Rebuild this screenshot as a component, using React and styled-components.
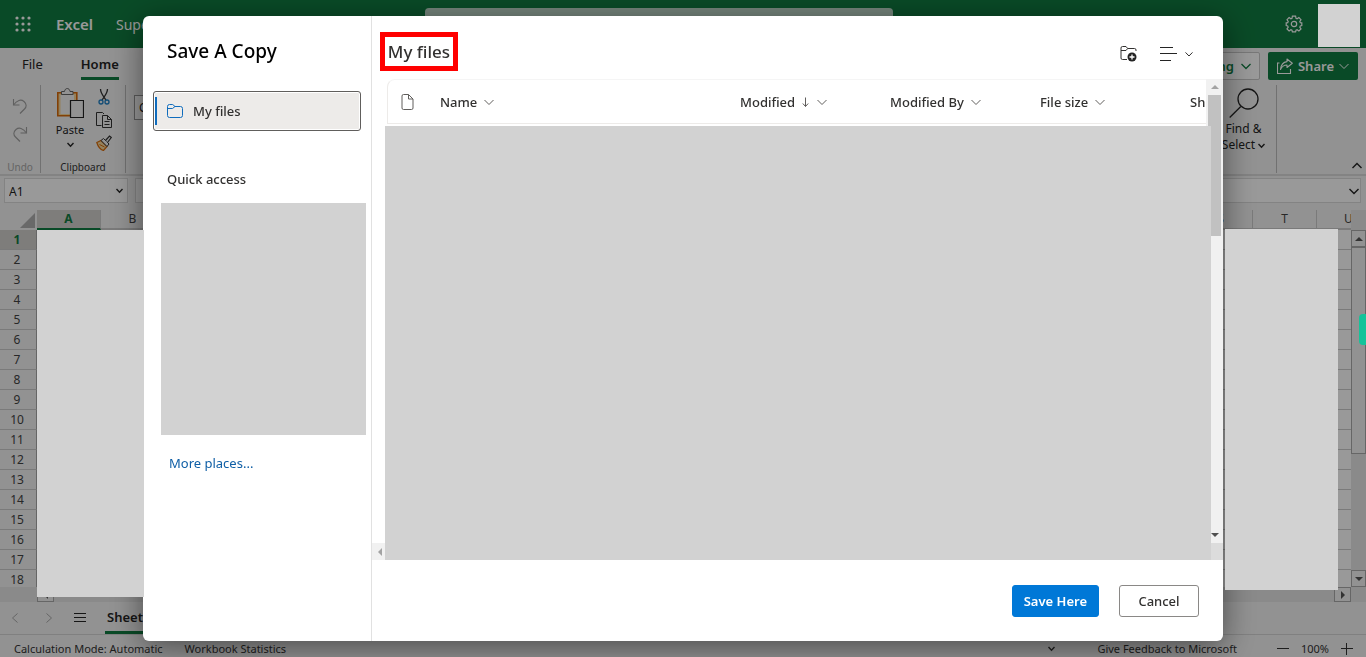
import React, { useState } from 'react';
import styled, { createGlobalStyle, css } from 'styled-components';

const GlobalStyle = createGlobalStyle`
  *, *::before, *::after {
    box-sizing: border-box;
  }

  body {
    margin: 0;
    overflow: hidden;
    font-family: 'Segoe UI', 'Noto Sans', 'Open Sans', sans-serif;
    font-size: 13px;
    color: #242424;
  }

  button, input {
    font: inherit;
    color: inherit;
  }

  svg {
    display: block;
    flex: none;
  }
`;

const Shell = styled.div`
  display: flex;
  flex-direction: column;
  height: 100vh;
  background: #f3f3f3;
`;

const PlainButton = styled.button`
  display: flex;
  align-items: center;
  justify-content: center;
  padding: 0;
  border: none;
  background: transparent;
  cursor: pointer;
`;

const Redacted = styled.div`
  background: #d2d2d2;
`;

/* ---------- top bar ---------- */

const TopBar = styled.header`
  display: grid;
  grid-template-columns: 1fr 468px 1fr 48px;
  height: 48px;
  flex: none;
  background: #107c41;
  color: #fff;
`;

const Brand = styled.div`
  display: flex;
  align-items: center;
  padding-left: 15px;
`;

const AppName = styled.span`
  margin: 0 23px 0 24px;
  font-size: 15px;
  font-weight: 600;
`;

const FileName = styled.span`
  font-size: 14px;
`;

const SearchBox = styled.input`
  height: 32px;
  margin: 8px 0;
  border: none;
  border-radius: 4px;
  background: #c2dccd;
`;

const TopActions = styled.div`
  display: flex;
  align-items: center;
  justify-content: flex-end;
  padding-right: 15px;
`;

const Avatar = styled(Redacted)`
  position: relative;
  z-index: 2;
  width: 42px;
  height: 43px;
  margin-top: 4px;
`;

/* ---------- ribbon ---------- */

const TabRow = styled.div`
  display: flex;
  align-items: center;
  height: 32px;
  margin-top: 2px;
  padding: 0 8px 0 22px;
  gap: 38px;
  flex: none;
  font-size: 13px;
`;

const Tab = styled(PlainButton)`
  height: 28px;
  padding-bottom: 1px;
  border-bottom: 3px solid ${({ $active }) => ($active ? '#107c41' : 'transparent')};
  font-weight: ${({ $active }) => ($active ? 600 : 400)};
`;

const RibbonActions = styled.div`
  display: flex;
  gap: 8px;
  margin-left: auto;
  font-weight: 600;
  font-size: 13px;
`;

const ModeButton = styled(PlainButton)`
  height: 28px;
  gap: 7px;
  padding: 0 8px;
  border: 1px solid #c8c8c8;
  border-radius: 2px;
  background: #fff;
  color: #107c41;
`;

const ShareButton = styled(PlainButton)`
  width: 90px;
  height: 28px;
  gap: 5px;
  border-radius: 2px;
  background: #107c41;
  color: #fff;
`;

const Ribbon = styled.div`
  display: flex;
  height: 94px;
  padding-top: 3px;
  flex: none;
  border-bottom: 2px solid #dadada;
  font-size: 12px;
`;

const Group = styled.div`
  display: flex;
  flex-direction: column;
  justify-content: space-between;
  align-items: center;
  width: ${({ $width }) => $width}px;
  height: 88px;
  border-right: 1px solid #bcbcbc;
`;

const GroupLabel = styled.span`
  font-size: 10px;
  line-height: 12px;
  color: ${({ $muted }) => ($muted ? '#a8a8a8' : '#333')};
`;

const UndoStack = styled.div`
  display: flex;
  flex-direction: column;
  gap: 12px;
  padding-top: 13px;
`;

const ClipboardTools = styled.div`
  display: flex;
  gap: 12px;
  padding-left: 2px;
`;

const PasteButton = styled(PlainButton)`
  flex-direction: column;
  justify-content: flex-start;
  gap: 2px;
  padding-top: 3px;
  font-size: 11px;
  line-height: 18px;
`;

const SmallTools = styled.div`
  display: flex;
  flex-direction: column;
  gap: 7px;
  padding-top: 4px;
`;

const FontBox = styled.input`
  width: 120px;
  height: 25px;
  margin: 10px 0 0 8px;
  padding: 0 4px;
  border: 1px solid #999;
  background: #fff;
`;

const FindGroup = styled(Group)`
  justify-content: flex-start;
  margin-left: auto;
  margin-right: 89px;
`;

const FindButton = styled(PlainButton)`
  flex-direction: column;
  padding-top: 3px;
  line-height: 16px;

  svg {
    margin-bottom: 3px;
  }

  span {
    display: flex;
    align-items: center;
    gap: 3px;
  }

  span svg {
    margin: 0;
  }
`;

const CollapseButton = styled(PlainButton)`
  position: absolute;
  right: 4px;
  top: 161px;
`;

/* ---------- formula bar ---------- */

const FormulaBar = styled.div`
  display: flex;
  gap: 7px;
  padding: 2px 5px 7px 4px;
  flex: none;
`;

const FormulaField = styled.div`
  display: flex;
  align-items: center;
  width: ${({ $wide }) => ($wide ? 'auto' : '124px')};
  flex: ${({ $wide }) => ($wide ? 1 : 'none')};
  height: 25px;
  padding-right: ${({ $wide }) => ($wide ? 1 : 4)}px;
  border: 1px solid #dadada;
  background: #fff;

  input {
    flex: 1;
    min-width: 0;
    padding: 2px 4px 0;
    border: none;
    background: transparent;
    font-size: 12px;
  }
`;

/* ---------- sheet ---------- */

const SheetArea = styled.div`
  position: relative;
  display: flex;
  flex: 1;
  min-height: 0;
`;

const GridColumn = styled.div`
  display: flex;
  flex-direction: column;
  flex: 1;
  min-width: 0;
`;

const GridClip = styled.div`
  flex: 1;
  min-height: 0;
  overflow: hidden;
`;

const Grid = styled.table`
  width: 1381px;
  table-layout: fixed;
  border-spacing: 0;
  color: #444;

  td {
    border-right: 1px solid #ccc;
    border-bottom: 1px solid #ccc;
    background: #fff;
  }
`;

const selected = css`
  background: #d2d0ce;
  color: #107c41;
  font-weight: 700;
`;

const ColumnHead = styled.th`
  width: 64px;
  height: 20px;
  padding: 0;
  border-right: 1px solid #ccc;
  border-bottom: 2px solid ${({ $selected }) => ($selected ? '#107c41' : '#ccc')};
  font-size: 12px;
  line-height: 16px;
  font-weight: 400;
  ${({ $selected }) => $selected && selected}
`;

const Corner = styled.th`
  width: 37px;
  padding: 0 2px 0 0;

  svg {
    margin-left: auto;
  }
`;

const RowHead = styled.th`
  height: 20px;
  padding: 1px 2px 0 0;
  border-right: 1px solid #aaa;
  border-bottom: 1px solid #ccc;
  font-size: 12px;
  line-height: 16px;
  font-weight: 400;
  ${({ $selected }) => $selected && selected}
`;

const VerticalBar = styled.div`
  display: flex;
  flex-direction: column;
  width: 15px;
  padding: 20px 0 15px;
  background: #e6e6e6;
`;

const HorizontalBar = styled.div`
  display: flex;
  justify-content: space-between;
  height: 15px;
  padding-left: 37px;
  flex: none;
  background: #e6e6e6;
`;

const ArrowButton = styled(PlainButton)`
  width: ${({ $wide }) => ($wide ? 17 : 15)}px;
  height: ${({ $wide }) => ($wide ? 15 : 17)}px;
  border: 1px solid #ababab;
  background: #f3f3f3;
  color: #555;
`;

const VerticalThumb = styled.div`
  height: 207px;
  margin: 0 0 auto;
  border: 1px solid #ababab;
  background: #f3f3f3;
`;

const LeftRedaction = styled(Redacted)`
  position: absolute;
  z-index: 3;
  left: 37px;
  top: 20px;
  bottom: 5px;
  width: 107px;
`;

const RightRedaction = styled(Redacted)`
  position: absolute;
  z-index: 2;
  right: 28px;
  top: 19px;
  bottom: 12px;
  width: 113px;
`;

const SheetTabs = styled.div`
  display: flex;
  align-items: center;
  height: 32px;
  padding-left: 11px;
  flex: none;
`;

const SheetNav = styled(PlainButton)`
  margin-right: ${({ $gap }) => $gap}px;
  color: ${({ $muted }) => ($muted ? '#a8a8a8' : '#242424')};
`;

const SheetTab = styled(PlainButton)`
  height: 32px;
  padding: 1px 2px 0;
  border-bottom: 3px solid #107c41;
  font-size: 13px;
  font-weight: 600;
`;

const StatusBar = styled.footer`
  display: flex;
  align-items: center;
  height: 23px;
  padding: 5px 13px 0 14px;
  flex: none;
  border-top: 1px solid #d6d6d6;
  font-size: 11px;
  line-height: 16px;
  color: #333;
`;

const StatusItem = styled.span`
  margin-right: 22px;
`;

const StatusRight = styled.div`
  display: flex;
  align-items: center;
  margin-left: auto;
`;

const Feedback = styled(PlainButton)`
  margin: 0 40px 0 42px;
`;

const Zoom = styled.div`
  display: flex;
  align-items: center;
  gap: 12px;
`;

const SideHandle = styled.div`
  position: absolute;
  z-index: 4;
  right: 0;
  top: 314px;
  width: 7px;
  height: 31px;
  border-radius: 4px 0 0 4px;
  background: #15c39a;
`;

/* ---------- dialog ---------- */

const Overlay = styled.div`
  position: fixed;
  inset: 0;
  z-index: 1;
  display: flex;
  justify-content: center;
  padding: 16px;
  background: rgba(0, 0, 0, 0.4);
`;

const Dialog = styled.section`
  display: flex;
  width: 100%;
  max-width: 1080px;
  border-radius: 6px;
  overflow: hidden;
  background: #fff;
  color: #323130;
  box-shadow: 0 6px 32px rgba(0, 0, 0, 0.5);
`;

const Places = styled.nav`
  display: flex;
  flex-direction: column;
  width: 229px;
  padding: 20px 10px;
  flex: none;
  border-right: 1px solid #e1e1e1;
`;

const DialogTitle = styled.h1`
  margin: 0 0 25px 14px;
  font-size: 19px;
  line-height: 30px;
  font-weight: 500;
  color: #000;
`;

const PlaceButton = styled.button`
  display: flex;
  align-items: center;
  gap: 10px;
  height: 40px;
  margin-bottom: 36px;
  padding: 0 9px 0 0;
  border: 1px solid #605e5c;
  border-radius: 3px;
  background: #edebe9;
  box-shadow: inset 0 0 0 1px #fff;
  font-weight: 500;
  cursor: pointer;

  &::before {
    content: '';
    width: 2px;
    height: 28px;
    margin-left: 1px;
    background: #0f6cbd;
  }
`;

const SectionLabel = styled.h2`
  margin: 0 0 12px 14px;
  font-size: 13px;
  line-height: 24px;
  font-weight: 500;
`;

const PlacesRedaction = styled(Redacted)`
  height: 232px;
  margin: 0 -5px 18px 8px;
`;

const MoreLink = styled.a`
  margin-left: 16px;
  font-size: 13px;
  line-height: 20px;
  color: #0f5fa6;
  text-decoration: none;
`;

const Files = styled.div`
  display: flex;
  flex-direction: column;
  flex: 1;
  min-width: 0;
`;

const FilesHeader = styled.div`
  display: flex;
  align-items: center;
  justify-content: space-between;
  height: 63px;
  padding: 7px 30px 0 8px;
  flex: none;
`;

const Location = styled.h2`
  margin: 0;
  width: 78px;
  border: 5px solid #f00;
  font-size: 17px;
  line-height: 29px;
  font-weight: 500;
  text-align: center;
  white-space: nowrap;
`;

const FileTools = styled.div`
  display: flex;
  align-items: center;
  gap: 23px;
  padding-top: 6px;
`;

const ViewButton = styled(PlainButton)`
  gap: 8px;
`;

const ListArea = styled.div`
  display: flex;
  flex: 1;
  min-height: 0;
`;

const ListGutter = styled.div`
  display: flex;
  align-items: flex-end;
  width: 13px;
  flex: none;
`;

const ScrollLeft = styled(PlainButton)`
  width: 13px;
  height: 17px;
  padding-left: 3px;
  background: #f1f1f1;
  color: #a3a3a3;
`;

const ListBody = styled.div`
  display: flex;
  flex-direction: column;
  flex: 1;
  min-width: 0;
`;

const HeadClip = styled.div`
  height: 47px;
  margin-left: 2px;
  flex: none;
  overflow: hidden;
`;

const HeadTable = styled.table`
  width: 953px;
  height: 45px;
  table-layout: fixed;
  border-spacing: 0;
  border: 1px solid #edebe9;
  border-width: 1px 0 1px 1px;
  border-top-color: #f5f5f5;
  border-radius: 8px 0 0 0;
`;

const HeadCell = styled.th`
  width: ${({ $width }) => $width}px;
  padding: 0 0 0 ${({ $inset }) => $inset || 0}px;
  text-align: left;
  font-size: 13px;
  font-weight: 500;
`;

const SortButton = styled(PlainButton)`
  gap: 7px;
  color: #323130;

  svg {
    color: #605e5c;
  }
`;

const ListRedaction = styled(Redacted)`
  position: relative;
  z-index: 1;
  flex: 1;
  margin-right: -5px;
`;

const ListScrollbar = styled.div`
  display: flex;
  flex-direction: column;
  width: 17px;
  flex: none;
  background: #f1f1f1;
`;

const ScrollArrow = styled(PlainButton)`
  height: 16px;
  color: ${({ $muted }) => ($muted ? '#a3a3a3' : '#505050')};
`;

const ScrollThumb = styled.div`
  height: 141px;
  margin: 0 2px auto;
  background: #c1c1c1;
`;

const ScrollCorner = styled.div`
  height: 17px;
  background: #dcdcdc;
`;

const DialogFooter = styled.div`
  display: flex;
  justify-content: flex-end;
  gap: 20px;
  padding: 25px 24px 24px;
  flex: none;
`;

const ActionButton = styled.button`
  min-width: 80px;
  height: 32px;
  padding: 0 11px;
  border: 1px solid ${({ $primary }) => ($primary ? '#0078d7' : '#8a8886')};
  border-radius: 3px;
  background: ${({ $primary }) => ($primary ? '#0078d7' : '#fff')};
  color: ${({ $primary }) => ($primary ? '#fff' : '#323130')};
  font-size: 13px;
  font-weight: ${({ $primary }) => ($primary ? 600 : 500)};
  cursor: pointer;
`;

/* ---------- icons ---------- */

const Icon = ({ w = 16, h = w, children, ...rest }) => (
  <svg
    width={w}
    height={h}
    viewBox={`0 0 ${w} ${h}`}
    fill="none"
    stroke="currentColor"
    aria-hidden="true"
    {...rest}
  >
    {children}
  </svg>
);

const Chevron = ({ size = 10, weight = 1, up = false }) => (
  <Icon w={size} strokeWidth={weight}>
    <path
      d={
        up
          ? `M.5 ${size * 0.7}L${size / 2} ${size * 0.25}L${size - 0.5} ${size * 0.7}`
          : `M.5 ${size * 0.3}L${size / 2} ${size * 0.75}L${size - 0.5} ${size * 0.3}`
      }
    />
  </Icon>
);

const triangles = {
  up: 'M0 6L4 2L8 6Z',
  down: 'M0 2L4 6L8 2Z',
  left: 'M6 0L2 4L6 8Z',
  right: 'M2 0L6 4L2 8Z',
};

const Triangle = ({ dir }) => (
  <Icon w={8} stroke="none" fill="currentColor">
    <path d={triangles[dir]} />
  </Icon>
);

const WaffleIcon = () => (
  <Icon w={17} stroke="none" fill="#fff">
    {[2, 8, 14].map((y) => [2, 8, 14].map((x) => <circle key={`${x}-${y}`} cx={x} cy={y} r="1.6" />))}
  </Icon>
);

const GearIcon = () => (
  <Icon w={18} strokeWidth="1.2">
    <path d="M7.4 1.2h3.2l.4 2.1 1.1.5 1.8-1.3 2.1 2.2-1.2 1.8.5 1.1 1.5.2v2.8l-1.5.4-.5 1.1 1.2 1.8-2.1 2.1-1.8-1.2-1.1.5-.4 1.5H7.4L7 15.3l-1.1-.5L4.1 16 2 13.9l1.2-1.8-.5-1.1-1.5-.4V7.8l1.5-.2.5-1.1L2 4.700l2.1-2.2 1.8 1.3L7 3.3z" />
    <circle cx="9" cy="9" r="2.7" />
  </Icon>
);

const ShareIcon = () => (
  <Icon w={16} strokeWidth="1.1">
    <path d="M2.5 5H.5v10.5h13V11" />
    <path d="M10 1l5.3 4.3L10 9.5V7C7 7 5 8.300 3.5 11.5 4 6.5 6.5 4 10 3.600z" strokeLinejoin="round" />
  </Icon>
);

const UndoIcon = ({ flip = false }) => (
  <Icon w={16} strokeWidth="1.1" color="#a0a0a0">
    <g transform={flip ? 'translate(16 0) scale(-1 1)' : undefined}>
      <path d="M1.5 1v6h6" />
      <path d="M1.5 7C5 2 9 1 12 3.500c3 2.700 2.600 5.500.5 7.500L8 15.500" />
    </g>
  </Icon>
);

const PasteIcon = () => (
  <Icon w={28} h={31}>
    <path d="M1.8 4.800h19v23h-19z" fill="#f7d79a" stroke="#d96c0a" strokeWidth="1.6" />
    <path d="M4.500 7h13.500v19H4.500z" fill="#f3f3f3" stroke="none" />
    <path d="M5.500 6.500v-3h3c.5-4 5-4 5.500 0h3v3z" fill="#f3f3f3" stroke="#666" />
    <path d="M14.500 12.500h13v17h-13z" fill="#f3f3f3" stroke="#242424" strokeWidth="1.2" />
  </Icon>
);

const CutIcon = () => (
  <Icon w={16}>
    <path d="M4.500 0c0 4 2 6 5.500 11M11.500 0c0 4-2 6-5.500 11" stroke="#333" strokeWidth="1.3" />
    <circle cx="5" cy="13" r="2" stroke="#1e7fc4" strokeWidth="1.3" />
    <circle cx="11" cy="13" r="2" stroke="#1e7fc4" strokeWidth="1.3" />
  </Icon>
);

const CopyIcon = () => (
  <Icon w={16} stroke="#333">
    <path d="M5.500 13.500h-5V.500h6l1.500 1.500" />
    <path d="M6.500 3.500h5l4 4v8h-9z" fill="#f3f3f3" />
    <path d="M11.500 3.500v4h4M8.500 9.500h5M8.500 12.500h5" />
  </Icon>
);

const BrushIcon = () => (
  <Icon w={16}>
    <path d="M.8 7.500L5 5.500l6 6-3.500 4C4 14.500 2 11.500.8 7.500z" fill="#f7d79a" stroke="#d96c0a" strokeWidth="1.2" />
    <path d="M3.500 9.500l5 2.500" stroke="#d96c0a" />
    <path d="M5 5.500L7.500 3.500l5.500 5.500-2 2.500z" fill="#f3f3f3" stroke="#333" />
    <path d="M9.500 5.500l4-4.500 1.800 1.500L11.500 7.500" fill="#f3f3f3" stroke="#333" strokeWidth="1.2" />
  </Icon>
);

const SearchIcon = () => (
  <Icon w={30} strokeWidth="1.3">
    <circle cx="19" cy="11" r="10" />
    <path d="M11.800 18.500L.7 29.500" />
  </Icon>
);

const CornerIcon = () => (
  <Icon w={15} stroke="none" fill="#b0b0b0">
    <path d="M15 0v15H0z" />
  </Icon>
);

const MenuIcon = () => (
  <Icon w={12}>
    <path d="M0 1.500h12M0 5.500h12M0 9.500h12" />
  </Icon>
);

const SideChevron = ({ right = false }) => (
  <Icon w={8} h={10}>
    <path d={right ? 'M1.5 .5L6.5 5L1.5 9.5' : 'M6.5 .5L1.5 5L6.5 9.5'} />
  </Icon>
);

const FolderIcon = () => (
  <Icon w={16} h={14} stroke="#0f6cbd">
    <path d="M.5 2.500a2 2 0 0 1 2-2h3.200L8 2.500h5.500a2 2 0 0 1 2 2v7a2 2 0 0 1-2 2h-11a2 2 0 0 1-2-2z" />
    <path d="M.5 4.500h5L8 2.500" />
  </Icon>
);

const FolderAddIcon = () => (
  <Icon w={17} h={16}>
    <path d="M7 13.500H2.500a1.500 1.500 0 0 1-1.500-1.500V2A1.500 1.500 0 0 1 2.500.5H6l1.700 2H14.500A1.500 1.500 0 0 1 16 4v1" />
    <path d="M1 4.500h5l1.700-2" />
    <circle cx="12" cy="11" r="4.500" fill="#242424" stroke="none" />
    <path d="M12 8.500v5M9.500 11h5" stroke="#fff" strokeWidth="1.3" />
  </Icon>
);

const LinesIcon = () => (
  <Icon w={17} h={14} stroke="#242424">
    <path d="M0 .5h13M0 6.500h17M0 13.500h11" />
  </Icon>
);

const FileIcon = () => (
  <Icon w={13} h={16} stroke="#605e5c">
    <path d="M7.500.5h-5a1.500 1.500 0 0 0-1.500 1.500v12a1.500 1.500 0 0 0 1.500 1.500h8a1.500 1.500 0 0 0 1.500-1.500V5z" />
    <path d="M7.500.5v4.500h4.500" />
  </Icon>
);

const SortArrow = () => (
  <Icon w={8} h={12}>
    <path d="M3.500 1.500v9M.8 7.500L3.500 10.500l2.700-3" />
  </Icon>
);

const MinusIcon = () => (
  <Icon w={12}>
    <path d="M0 5.500h12" />
  </Icon>
);

const PlusIcon = () => (
  <Icon w={12}>
    <path d="M0 5.500h12M5.500 0v12" />
  </Icon>
);

const columns = 'ABCDEFGHIJKLMNOPQRSTU'.split('');
const rows = Array.from({ length: 18 }, (_, i) => i + 1);

const listColumns = [
  { label: 'Name', width: 300, sortable: true },
  { label: 'Modified', width: 150, sortable: true, sorted: true },
  { label: 'Modified By', width: 150, sortable: true },
  { label: 'File size', width: 150, sortable: true },
  { label: 'Sh', width: 150 },
];

const Workbook = () => {
  const [cell, setCell] = useState('A1');

  return (
    <Shell>
      <TopBar>
        <Brand>
          <PlainButton aria-label="App launcher"><WaffleIcon /></PlainButton>
          <AppName>Excel</AppName>
          <FileName>Superstore</FileName>
        </Brand>
        <SearchBox type="search" aria-label="Search" />
        <TopActions>
          <PlainButton aria-label="Settings"><GearIcon /></PlainButton>
        </TopActions>
        <Avatar />
      </TopBar>

      <TabRow>
        <Tab>File</Tab>
        <Tab $active>Home</Tab>
        <RibbonActions>
          <ModeButton>Editing <Chevron weight={1.3} /></ModeButton>
          <ShareButton><ShareIcon /> Share <Chevron /></ShareButton>
        </RibbonActions>
      </TabRow>

      <Ribbon>
        <Group $width={41}>
          <UndoStack>
            <PlainButton aria-label="Undo"><UndoIcon /></PlainButton>
            <PlainButton aria-label="Redo"><UndoIcon flip /></PlainButton>
          </UndoStack>
          <GroupLabel $muted>Undo</GroupLabel>
        </Group>
        <Group $width={85}>
          <ClipboardTools>
            <PasteButton><PasteIcon />Paste<Chevron size={7} weight={1.4} /></PasteButton>
            <SmallTools>
              <PlainButton aria-label="Cut"><CutIcon /></PlainButton>
              <PlainButton aria-label="Copy"><CopyIcon /></PlainButton>
              <PlainButton aria-label="Format painter"><BrushIcon /></PlainButton>
            </SmallTools>
          </ClipboardTools>
          <GroupLabel>Clipboard</GroupLabel>
        </Group>
        <FontBox aria-label="Font" defaultValue="Calibri" />
        <FindGroup $width={66}>
          <FindButton>
            <SearchIcon />
            <span>Find &amp;</span>
            <span>Select <Chevron size={7} weight={1.4} /></span>
          </FindButton>
        </FindGroup>
        <CollapseButton aria-label="Collapse ribbon"><Chevron weight={1.4} up /></CollapseButton>
      </Ribbon>

      <FormulaBar>
        <FormulaField>
          <input aria-label="Name box" value={cell} onChange={(e) => setCell(e.target.value)} />
          <Chevron size={7} weight={1.4} />
        </FormulaField>
        <FormulaField $wide>
          <input aria-label="Formula" />
          <Chevron weight={1.4} />
        </FormulaField>
      </FormulaBar>

      <SheetArea>
        <GridColumn>
          <GridClip>
            <Grid>
              <thead>
                <tr>
                  <Corner><CornerIcon /></Corner>
                  {columns.map((name) => (
                    <ColumnHead key={name} $selected={name === 'A'}>{name}</ColumnHead>
                  ))}
                </tr>
              </thead>
              <tbody>
                {rows.map((row) => (
                  <tr key={row}>
                    <RowHead $selected={row === 1}>{row}</RowHead>
                    {columns.map((name) => <td key={name} />)}
                  </tr>
                ))}
              </tbody>
            </Grid>
          </GridClip>
          <HorizontalBar>
            <ArrowButton $wide aria-label="Scroll left"><Triangle dir="left" /></ArrowButton>
            <ArrowButton $wide aria-label="Scroll right"><Triangle dir="right" /></ArrowButton>
          </HorizontalBar>
        </GridColumn>
        <VerticalBar>
          <ArrowButton aria-label="Scroll up"><Triangle dir="up" /></ArrowButton>
          <VerticalThumb />
          <ArrowButton aria-label="Scroll down"><Triangle dir="down" /></ArrowButton>
        </VerticalBar>
        <LeftRedaction />
        <RightRedaction />
      </SheetArea>

      <SheetTabs>
        <SheetNav $muted $gap={26} aria-label="Previous sheet"><SideChevron /></SheetNav>
        <SheetNav $muted $gap={21} aria-label="Next sheet"><SideChevron right /></SheetNav>
        <SheetNav $gap={19} aria-label="All sheets"><MenuIcon /></SheetNav>
        <SheetTab>Sheet1</SheetTab>
      </SheetTabs>

      <StatusBar>
        <StatusItem>Calculation Mode: Automatic</StatusItem>
        <StatusItem>Workbook Statistics</StatusItem>
        <StatusRight>
          <Chevron size={7} weight={1.4} />
          <Feedback>Give Feedback to Microsoft</Feedback>
          <Zoom>
            <PlainButton aria-label="Zoom out"><MinusIcon /></PlainButton>
            100%
            <PlainButton aria-label="Zoom in"><PlusIcon /></PlainButton>
          </Zoom>
        </StatusRight>
      </StatusBar>
      <SideHandle />
    </Shell>
  );
};

const SaveDialog = () => (
  <Overlay>
    <Dialog role="dialog" aria-labelledby="save-title">
      <Places>
        <DialogTitle id="save-title">Save A Copy</DialogTitle>
        <PlaceButton><FolderIcon />My files</PlaceButton>
        <SectionLabel>Quick access</SectionLabel>
        <PlacesRedaction />
        <MoreLink href="#places">More places...</MoreLink>
      </Places>

      <Files>
        <FilesHeader>
          <Location>My files</Location>
          <FileTools>
            <PlainButton aria-label="New folder"><FolderAddIcon /></PlainButton>
            <ViewButton aria-label="View options"><LinesIcon /><Chevron size={8} /></ViewButton>
          </FileTools>
        </FilesHeader>

        <ListArea>
          <ListGutter>
            <ScrollLeft aria-label="Scroll list left"><Triangle dir="left" /></ScrollLeft>
          </ListGutter>
          <ListBody>
            <HeadClip>
              <HeadTable>
                <thead>
                  <tr>
                    <HeadCell $width={52} $inset={13} aria-label="File type"><FileIcon /></HeadCell>
                    {listColumns.map(({ label, width, sortable, sorted }) => (
                      <HeadCell key={label} $width={width}>
                        <SortButton>
                          {label}
                          {sorted && <SortArrow />}
                          {sortable && <Chevron />}
                        </SortButton>
                      </HeadCell>
                    ))}
                  </tr>
                </thead>
              </HeadTable>
            </HeadClip>
            <ListRedaction />
          </ListBody>
          <ListScrollbar>
            <ScrollArrow $muted aria-label="Scroll list up"><Triangle dir="up" /></ScrollArrow>
            <ScrollThumb />
            <ScrollArrow aria-label="Scroll list down"><Triangle dir="down" /></ScrollArrow>
            <ScrollCorner />
          </ListScrollbar>
        </ListArea>

        <DialogFooter>
          <ActionButton $primary>Save Here</ActionButton>
          <ActionButton>Cancel</ActionButton>
        </DialogFooter>
      </Files>
    </Dialog>
  </Overlay>
);

const App = () => (
  <>
    <GlobalStyle />
    <Workbook />
    <SaveDialog />
  </>
);

export default App;
